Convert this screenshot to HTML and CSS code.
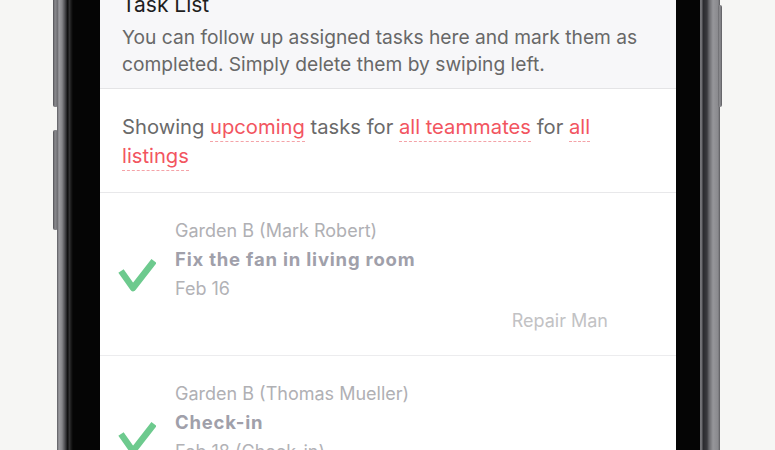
FILE: index.html
```html
<!DOCTYPE html>
<html>
<head>
<meta charset="utf-8">
<link rel="stylesheet" href="styles.css">
</head>
<body>
<div class="stage">
  <div class="phone">
    <span class="btn btn-l1"></span>
    <span class="btn btn-l2"></span>
    <span class="btn btn-r1"></span>
    <div class="screen">
      <section class="intro">
        <h1 class="intro-title">Task List</h1>
        <p class="intro-text">You can follow up assigned tasks here and mark them as completed. Simply delete them by swiping left.</p>
      </section>
      <section class="filter">
        <p class="filter-text">Showing <span class="pick">upcoming</span> tasks for <span class="pick">all teammates</span> for <span class="pick">all listings</span></p>
      </section>
      <article class="task">
        <div class="task-check">
          <svg width="38" height="36" viewBox="0 0 38 36"><polyline points="3,14 15,31 36,4" fill="none" stroke="#6dca8e" stroke-width="6.5" stroke-linejoin="round"/></svg>
        </div>
        <div class="task-body">
          <div class="task-place">Garden B (Mark Robert)</div>
          <div class="task-name">Fix the fan in living room</div>
          <div class="task-date">Feb 16</div>
          <div class="task-role">Repair Man</div>
        </div>
      </article>
      <article class="task">
        <div class="task-check">
          <svg width="38" height="36" viewBox="0 0 38 36"><polyline points="3,14 15,31 36,4" fill="none" stroke="#6dca8e" stroke-width="6.5" stroke-linejoin="round"/></svg>
        </div>
        <div class="task-body">
          <div class="task-place">Garden B (Thomas Mueller)</div>
          <div class="task-name">Check-in</div>
          <div class="task-date">Feb 18 (Check-in)</div>
          <div class="task-role">Cleaner</div>
        </div>
      </article>
    </div>
  </div>
</div>
</body>
</html>
```
FILE: styles.css
```css
html, body {
  margin: 0;
  padding: 0;
}
body {
  background: #f6f6f4;
  font-family: Inter, "Noto Sans", sans-serif;
  overflow: hidden;
  height: 450px;
}
.stage {
  display: flex;
  padding-left: 57px;
  height: 450px;
  overflow: hidden;
}
.phone {
  position: relative;
  width: 663px;
  height: 480px;
  box-sizing: border-box;
  padding-left: 43px;
  background: linear-gradient(to right,
    #5a5a5e 0px, #9c9ca0 2px, #86868a 5px, #4a4a4e 8px, #1c1c1e 10px,
    #050505 11px, #3a3a3c 12px, #1a1a1a 14px, #050505 16px,
    #050505 643px, #77777b 643px, #6a6a6e 645px, #2a2a2e 646px,
    #3a3a3e 650px, #66666a 652px, #96969a 656px, #8a8a8e 661px, #5a5a5e 663px);
}
.btn {
  position: absolute;
  background: linear-gradient(to right, #4e4e52, #8a8a8e 40%, #6a6a6e);
  border-radius: 2px;
}
.btn-l1 {
  left: -4px;
  top: -10px;
  width: 5px;
  height: 117px;
}
.btn-l2 {
  left: -4px;
  top: 130px;
  width: 5px;
  height: 100px;
}
.btn-r1 {
  left: 661px;
  top: 5px;
  width: 4px;
  height: 102px;
  background: linear-gradient(to right, #6a6a6e, #909094 50%, #5a5a5e);
}
.screen {
  width: 576px;
  height: 100%;
  background: #ffffff;
}
.intro {
  background: #f7f7f9;
  padding: 0 22px 11px;
  border-bottom: 1px solid #e4e4e6;
}
.intro-title {
  margin: -7px 0 7px;
  font-size: 21px;
  line-height: 24px;
  font-weight: 400;
  color: #1e1e1e;
}
.intro-text {
  margin: 0;
  font-size: 19.2px;
  line-height: 26.5px;
  color: #686868;
}
.filter {
  padding: 23px 22px 22px;
  border-bottom: 1px solid #e8e8ea;
}
.filter-text {
  margin: 0;
  font-size: 20.2px;
  line-height: 29px;
  color: #6a6a6a;
}
.pick {
  color: #f2555f;
  border-bottom: 1px dashed #f4a3a8;
  padding-bottom: 2px;
}
.task {
  display: flex;
  padding: 23px 20px 20px 18px;
  border-bottom: 1px solid #ececee;
}
.task-check {
  width: 38px;
  margin-top: 41px;
  margin-right: 19px;
  flex: none;
}
.task-check svg {
  display: block;
}
.task-body {
  flex: 1;
  font-size: 18px;
  line-height: 29px;
  padding-right: 48px;
}
.task-place {
  color: #b0b0b4;
}
.task-name {
  color: #a0a0aa;
  font-weight: 700;
  font-size: 18.5px;
  letter-spacing: 0.8px;
}
.task-date {
  color: #b2b2b6;
}
.task-role {
  color: #c2c2c4;
  text-align: right;
  margin-top: 3px;
}
```
